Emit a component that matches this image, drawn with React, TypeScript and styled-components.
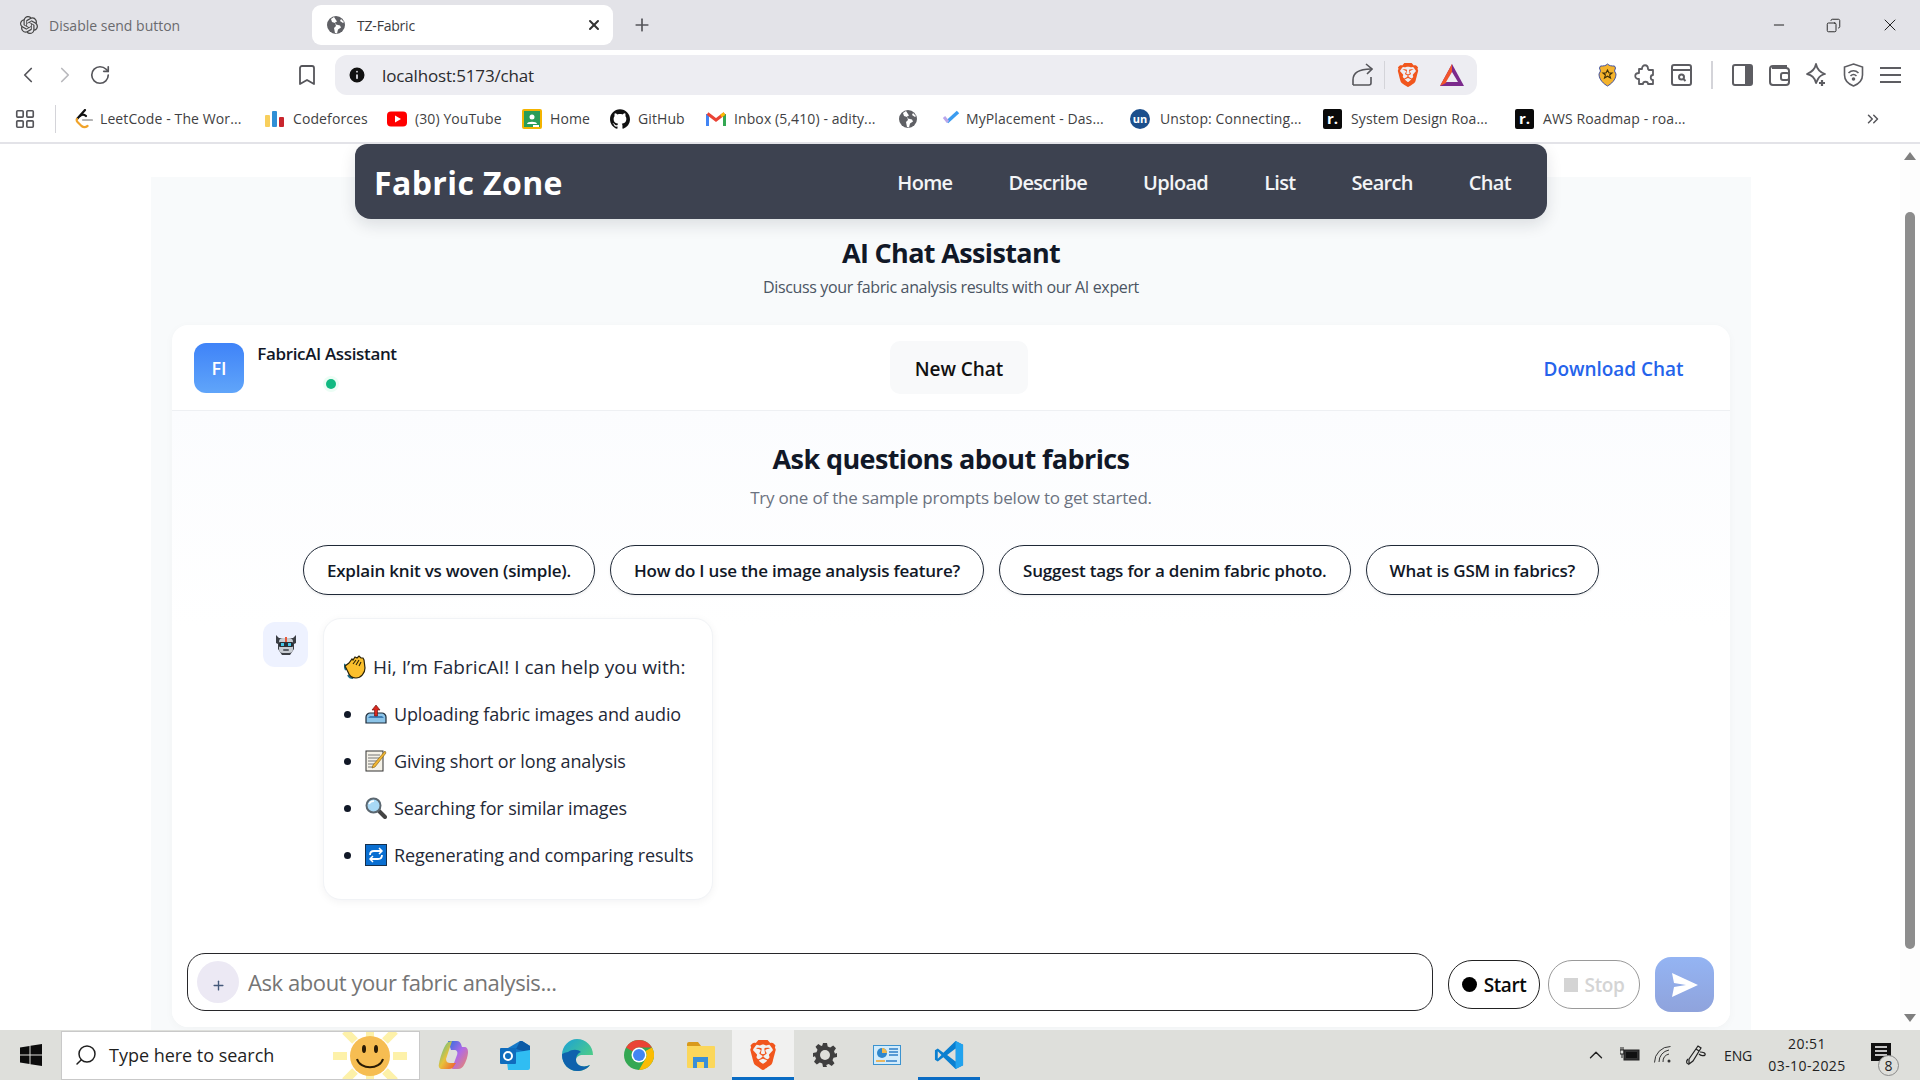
import React from 'react';
import styled, { createGlobalStyle } from 'styled-components';
import { ChevronLeft, ChevronRight, ChevronUp, ChevronsRight, Copy, Info, LayoutGrid, Minus, Plus, RotateCw, Bookmark, Search as SearchIcon, X } from 'lucide-react';
import { SiBrave, SiGithub, SiOpenai } from 'react-icons/si';

const UI_FONT = `"Open Sans", "Noto Sans", sans-serif`;

const GlobalStyle = createGlobalStyle`
    html, body { margin: 0; padding: 0; background: #fff; overflow: hidden; }
    * { box-sizing: border-box; }
    body { font-family: ${UI_FONT}; }
`;

const Screen = styled.div`
    width: 1920px;
    height: 1080px;
    display: flex;
    flex-direction: column;
    overflow: hidden;
`;

/* browser chrome */
const TabStrip = styled.div`
    height: 50px;
    background: #e3e3e8;
    display: flex;
    align-items: flex-end;
    padding: 0 0 5px 20px;
    flex-shrink: 0;
`;
const InactiveTab = styled.div`
    width: 292px;
    height: 40px;
    display: flex;
    align-items: center;
    gap: 11px;
    font-size: 14px;
    color: #6a6a6e;
`;
const ActiveTab = styled.div`
    width: 301px;
    height: 40px;
    background: #fff;
    border-radius: 9px;
    display: flex;
    align-items: center;
    padding: 0 11px 0 15px;
    gap: 12px;
    font-size: 14px;
    letter-spacing: -0.2px;
    color: #3b3b3f;
`;
const TabTitle = styled.span`
    flex: 1;
`;
const NewTab = styled.div`
    margin-left: 19px;
    height: 40px;
    display: flex;
    align-items: center;
    color: #55555a;
`;
const WindowControls = styled.div`
    margin-left: auto;
    height: 40px;
    display: flex;
    align-items: center;
    gap: 39px;
    padding-right: 20px;
    color: #222;
`;
const Toolbar = styled.div`
    height: 50px;
    background: #fff;
    display: flex;
    align-items: center;
    padding-left: 15px;
    flex-shrink: 0;
`;
const NavButtons = styled.div`
    display: flex;
    align-items: center;
    gap: 11px;
    width: 280px;
    color: #55555a;
`;
const AddressBar = styled.div`
    width: 1142px;
    height: 40px;
    margin-left: 16px;
    border-radius: 12px;
    background: #ededf2;
    display: flex;
    align-items: center;
    padding: 0 13px 0 12px;
    font-size: 17px;
    letter-spacing: -0.15px;
    color: #2b2b2e;
`;
const Url = styled.span`
    margin-left: 15px;
    flex: 1;
`;
const Divider = styled.span`
    width: ${p => p.$w ?? 1}px;
    height: 28px;
    background: #d4d4d9;
    margin: 0 ${p => p.$gap ?? 12}px;
    flex-shrink: 0;
`;
const AddressSpacer = styled.span`
    width: 20px;
`;
const ExtensionTray = styled.div`
    display: flex;
    align-items: center;
    margin-left: 120px;
    gap: 16px;
`;
const BookmarksBar = styled.div`
    height: 44px;
    background: #fff;
    border-bottom: 2px solid #e3e3e8;
    display: flex;
    align-items: center;
    padding: 0 0 5px 14px;
    flex-shrink: 0;
    font-size: 14px;
    letter-spacing: 0.1px;
    color: #3f3f43;
`;
const BookmarkItem = styled.div`
    width: ${p => p.$w}px;
    display: flex;
    align-items: center;
    gap: ${p => p.$gap ?? 8}px;
    white-space: nowrap;
    flex-shrink: 0;
`;
const Overflow = styled.div`
    margin-left: auto;
    padding-right: 38px;
    display: flex;
    color: #55555a;
`;
const RoadmapLogo = styled.span`
    width: 19px;
    height: 20px;
    background: #0a0a0a;
    border-radius: 2px;
    color: #fff;
    font-size: 15px;
    font-weight: 700;
    line-height: 19px;
    text-align: center;
    letter-spacing: 0;
`;
const UnstopLogo = styled.span`
    width: 20px;
    height: 20px;
    border-radius: 50%;
    background: #1c4f8c;
    color: #fff;
    font-size: 11px;
    font-weight: 700;
    line-height: 19px;
    text-align: center;
    letter-spacing: 0;
`;

/* page */
const Viewport = styled.div`
    flex: 1;
    min-height: 0;
    display: flex;
`;
const PageArea = styled.div`
    flex: 1;
    min-width: 0;
    padding-left: 2px;
    overflow: hidden;
`;
const Navbar = styled.nav`
    position: relative;
    z-index: 2;
    width: 1192px;
    height: 75px;
    margin: 0 auto;
    padding: 2px 36px 0 19px;
    background: #3d4250;
    border-radius: 12px 12px 16px 16px;
    box-shadow: 0 6px 16px rgba(17, 24, 39, 0.12);
    display: flex;
    align-items: center;
    justify-content: space-between;
`;
const Brand = styled.div`
    font-size: 32px;
    font-weight: 700;
    color: #fff;
    letter-spacing: 0.4px;
`;
const NavLinks = styled.div`
    display: flex;
    gap: 56px;
`;
const NavLink = styled.span`
    font-size: 20px;
    font-weight: 600;
    letter-spacing: -0.68px;
    color: #f3f4f6;
`;
const Container = styled.main`
    width: 1600px;
    height: 853px;
    margin: -42px auto 0;
    padding: 0 21px 3px;
    background: #f8fafb;
    display: flex;
    flex-direction: column;
`;
const PageHeader = styled.header`
    height: 148px;
    padding-top: 57px;
    text-align: center;
`;
const PageTitle = styled.h1`
    margin: 0;
    font-size: 27px;
    line-height: 38px;
    font-weight: 700;
    color: #111827;
    letter-spacing: -0.65px;
`;
const PageSubtitle = styled.p`
    margin: 4px 0 0;
    font-size: 16px;
    line-height: 22px;
    color: #4b5563;
    letter-spacing: -0.36px;
`;
const ChatCard = styled.section`
    flex: 1;
    min-height: 0;
    background: #fff;
    border-radius: 16px;
    box-shadow: 0 2px 10px rgba(17, 24, 39, 0.03);
    display: flex;
    flex-direction: column;
    overflow: hidden;
`;
const ChatHeader = styled.div`
    height: 86px;
    flex-shrink: 0;
    padding: 0 22px;
    border-bottom: 1px solid #eef0f3;
    display: flex;
    align-items: center;
    justify-content: space-between;
`;
const AssistantInfo = styled.div`
    display: flex;
    gap: 13px;
    width: 203px;
`;
const AssistantAvatar = styled.div`
    width: 50px;
    height: 50px;
    border-radius: 12px;
    background: linear-gradient(180deg, #3f83f8 0%, #60a5fa 100%);
    color: #fff;
    font-size: 18px;
    font-weight: 600;
    display: flex;
    align-items: center;
    justify-content: center;
`;
const AssistantMeta = styled.div`
    flex: 1;
    display: flex;
    flex-direction: column;
    align-items: center;
`;
const AssistantName = styled.div`
    font-size: 17px;
    line-height: 22px;
    font-weight: 600;
    letter-spacing: -0.35px;
    color: #111827;
    white-space: nowrap;
`;
const StatusDot = styled.span`
    width: 10px;
    height: 10px;
    margin: 14px 0 0 8px;
    border-radius: 50%;
    background: #10b981;
    box-shadow: 0 0 0 3px #ecfdf5;
`;
const NewChatButton = styled.button`
    width: 138px;
    height: 53px;
    border: 0;
    border-radius: 10px;
    padding: 2px 0 0;
    background: #f8f9fa;
    font: 600 19px ${UI_FONT};
    letter-spacing: -0.05px;
    color: #111;
`;
const DownloadButton = styled.button`
    width: 187px;
    height: 53px;
    border: 0;
    padding: 2px 2px 0 0;
    background: transparent;
    font: 600 19px ${UI_FONT};
    letter-spacing: -0.05px;
    color: #2563eb;
`;
const ChatBody = styled.div`
    flex: 1;
    min-height: 0;
    padding-top: 29px;
    display: flex;
    flex-direction: column;
    background: linear-gradient(180deg, #fbfcfe 0%, #fff 35%);
`;
const IntroTitle = styled.h2`
    margin: 0;
    font-size: 27px;
    line-height: 38px;
    font-weight: 700;
    text-align: center;
    letter-spacing: -0.6px;
    color: #111827;
`;
const IntroText = styled.p`
    margin: 8px 0 0;
    font-size: 17px;
    line-height: 24px;
    text-align: center;
    letter-spacing: -0.2px;
    color: #6b7280;
`;
const Chips = styled.div`
    margin-top: 35px;
    display: flex;
    justify-content: center;
    gap: 15px;
`;
const Chip = styled.button`
    height: 50px;
    padding: 0 23px;
    background: #fff;
    border: 1px solid #1f2937;
    border-radius: 25px;
    font: 600 17px ${UI_FONT};
    letter-spacing: -0.2px;
    color: #111827;
    box-shadow: 0 1px 3px rgba(0, 0, 0, 0.08);
    white-space: nowrap;
`;
const MessageRow = styled.div`
    margin-top: 23px;
    padding-left: 91px;
    display: flex;
    align-items: flex-start;
    gap: 15px;
`;
const BotAvatar = styled.div`
    width: 45px;
    height: 45px;
    margin-top: 4px;
    border-radius: 12px;
    background: #eef2ff;
    display: flex;
    align-items: center;
    justify-content: center;
`;
const Bubble = styled.div`
    width: 390px;
    height: 282px;
    padding: 31px 0 0 20px;
    background: #fff;
    border: 1px solid #f1f3f6;
    border-radius: 18px;
    box-shadow: 0 2px 8px rgba(17, 24, 39, 0.05);
    font-size: 18px;
    letter-spacing: -0.13px;
    color: #1f2937;
`;
const BubbleLine = styled.div`
    height: 34px;
    display: flex;
    align-items: center;
    gap: 6px;
    font-size: 19px;
    letter-spacing: 0.03px;
    white-space: nowrap;
`;
const BubbleList = styled.ul`
    margin: 13px 0 0;
    padding: 0;
    list-style: none;
    display: flex;
    flex-direction: column;
    gap: 13px;
`;
const BubbleItem = styled.li`
    height: 34px;
    display: flex;
    align-items: center;
    gap: 7px;
    white-space: nowrap;

    &::before {
        content: '';
        width: 7px;
        height: 7px;
        border-radius: 50%;
        background: #111827;
        margin-right: 7px;
        flex-shrink: 0;
    }
`;
const Composer = styled.div`
    margin-top: auto;
    padding: 0 16px 11px 15px;
    display: flex;
    align-items: center;
`;
const InputBox = styled.div`
    flex: 1;
    height: 58px;
    margin-bottom: 5px;
    padding-left: 9px;
    border: 1.5px solid #27272a;
    border-radius: 18px;
    display: flex;
    align-items: center;
    gap: 9px;
    font-size: 22px;
    letter-spacing: -0.42px;
    color: #757575;
`;
const AttachButton = styled.span`
    width: 42px;
    height: 42px;
    padding-top: 6px;
    border-radius: 50%;
    background: #ece9f4;
    color: #44597a;
    display: flex;
    align-items: center;
    justify-content: center;
`;
const RecordButton = styled.button`
    width: 92px;
    height: 49px;
    margin-left: ${p => p.$gap}px;
    border: 1px solid ${p => (p.$muted ? '#9a9a9a' : '#222')};
    border-radius: 24px;
    background: #fff;
    display: flex;
    align-items: center;
    justify-content: center;
    gap: 7px;
    font: 600 19px ${UI_FONT};
    letter-spacing: -0.4px;
    color: ${p => (p.$muted ? '#d4d4d4' : '#0a0a0a')};
    padding: 0;
`;
const RecordDot = styled.span`
    width: 15px;
    height: 15px;
    border-radius: 50%;
    background: #000;
`;
const StopSquare = styled.span`
    width: 14px;
    height: 14px;
    background: #d4d4d4;
`;
const SendButton = styled.button`
    width: 59px;
    height: 55px;
    margin-left: 15px;
    border: 0;
    border-radius: 16px;
    background: linear-gradient(180deg, #94b4f3 0%, #8fa3dc 100%);
    display: flex;
    align-items: center;
    justify-content: center;
    padding: 0;
`;
const Scrollbar = styled.div`
    width: 20px;
    background: #fdfdfd;
    display: flex;
    flex-direction: column;
    align-items: center;
    padding: 8px 0;
`;
const ScrollThumb = styled.div`
    width: 10px;
    height: 737px;
    margin-top: 52px;
    border-radius: 5px;
    background: #8c8c8c;
`;
const ScrollArrow = styled.div`
    width: 0;
    height: 0;
    border-left: 6px solid transparent;
    border-right: 6px solid transparent;
    ${p => (p.$down ? 'border-top: 8px solid #7f7f7f; margin-top: auto;' : 'border-bottom: 8px solid #7f7f7f;')}
`;

/* taskbar */
const Taskbar = styled.footer`
    height: 50px;
    flex-shrink: 0;
    background: #dedfdb;
    display: flex;
    align-items: center;
`;
const StartButton = styled.div`
    width: 61px;
    display: flex;
    justify-content: center;
`;
const SearchBox = styled.div`
    width: 359px;
    height: 49px;
    background: #fff;
    border: 1px solid #c9c9c9;
    display: flex;
    align-items: center;
    padding-left: 12px;
    gap: 11px;
    font-size: 18px;
    letter-spacing: -0.02px;
    color: #1f1f1f;
    position: relative;
    overflow: hidden;
`;
const SunBadge = styled.div`
    position: absolute;
    right: 12px;
    top: -5px;
`;
const TaskIcons = styled.div`
    display: flex;
    margin-left: 2px;
`;
const TaskIcon = styled.div`
    width: 62px;
    height: 50px;
    display: flex;
    align-items: center;
    justify-content: center;
    background: ${p => (p.$active ? '#f1f1f0' : 'transparent')};
    border-bottom: 3px solid ${p => (p.$open ? '#0a6cc4' : 'transparent')};
    padding-top: 3px;
`;
const Tray = styled.div`
    margin-left: auto;
    padding-right: 9px;
    display: flex;
    align-items: center;
    color: #222;
`;
const TrayIcon = styled.div`
    width: ${p => p.$w ?? 33}px;
    display: flex;
    justify-content: center;
`;
const TrayLang = styled.div`
    width: 48px;
    margin-left: 2px;
    font-size: 14px;
    letter-spacing: -0.2px;
    text-align: center;
`;
const Clock = styled.div`
    width: 92px;
    margin-left: -1px;
    margin-right: -2px;
    font-size: 14px;
    line-height: 22px;
    letter-spacing: 0.45px;
    text-align: center;
    color: #222;
`;
const Notifications = styled.div`
    width: 60px;
    position: relative;
    display: flex;
    justify-content: center;
    padding-bottom: 6px;
`;
const NotificationCount = styled.span`
    position: absolute;
    left: 27px;
    top: 12px;
    width: 21px;
    height: 21px;
    border-radius: 50%;
    background: #dedfdb;
    border: 1px solid #8a8a8a;
    font-size: 14px;
    line-height: 19px;
    text-align: center;
`;

/* drawn logos */
const GlobeIcon = () => (
    <svg width="18" height="18" viewBox="0 0 18 18"><circle cx="9" cy="9" r="9" fill="#5f6065" /><path d="M7 1 4 3l1 3 3 1 1 3-2 2 1 5 2 .500 1-4 3-2-1-2-4-1-1-2 2-1zM14 3l-1 2 3 2 1-1z" fill="#fff" /></svg>
);
const YouTubeIcon = () => (
    <svg width="20" height="16" viewBox="0 0 20 16"><rect width="20" height="15" y=".5" rx="4" fill="#f00" /><path d="M8 4.500v7l6-3.500z" fill="#fff" /></svg>
);
const CodeforcesIcon = () => (
    <svg width="20" height="16" viewBox="0 0 20 16"><rect x="0" y="4" width="5" height="12" rx="1" fill="#f8cf5c" /><rect x="7" y="0" width="5" height="16" rx="1" fill="#2f8fd6" /><rect x="14" y="6" width="5" height="10" rx="1" fill="#c9252d" /></svg>
);
const LeetCodeIcon = () => (
    <svg width="18" height="20" viewBox="0 0 18 20" fill="none" strokeWidth="2.200" strokeLinecap="round"><path d="M10 1 2 10" stroke="#111" /><path d="M5 7c2-2 4-2 6 0" stroke="#111" /><path d="M2 10c-.5 1-.5 2 .500 3l4 4c2 1.500 4 1.500 6 0" stroke="#f0a32a" /><path d="M8 11h9" stroke="#b3b3b3" /></svg>
);
const ClassroomIcon = () => (
    <svg width="20" height="20" viewBox="0 0 20 20"><rect width="20" height="20" rx="2" fill="#f4b400" /><rect x="2" y="2" width="16" height="16" fill="#2a9d58" /><circle cx="10" cy="8" r="2.500" fill="#fff" /><path d="M5 15c0-3 10-3 10 0z" fill="#fff" /><rect x="11" y="16" width="6" height="2" fill="#fff" /></svg>
);
const GmailIcon = () => (
    <svg width="20" height="16" viewBox="0 0 20 16" fill="none"><path d="M1.500 15V3" stroke="#4285f4" strokeWidth="3" /><path d="M18.500 15V3" stroke="#34a853" strokeWidth="3" /><path d="M1.500 2.500 10 9l8.500-6.500" stroke="#ea4335" strokeWidth="3" /><path d="M18.500 2.500 15 5" stroke="#fbbc04" strokeWidth="3" /></svg>
);
const PlacementIcon = () => (
    <svg width="20" height="20" viewBox="0 0 20 20" fill="none"><path d="M5 13 16 3" stroke="#3b9cf0" strokeWidth="3.500" /><path d="M2 8l4 5" stroke="#b9a6ea" strokeWidth="3" /></svg>
);
const BraveIcon = ({ size = 26 }: { size?: number }) => (
    <SiBrave size={size} color="#f1561d" />
);
const BatTriangle = () => (
    <svg width="24" height="22" viewBox="0 0 24 22"><path d="M12 0 0 22h24z" fill="#7b2a8c" /><path d="M12 0 0 22l6-3 6-11z" fill="#f2552c" /><path d="M12 8 6 18h12z" fill="#ededf2" /></svg>
);
const ShareIcon = () => (
    <svg width="22" height="24" viewBox="0 0 22 24" fill="none" stroke="#55555a" strokeWidth="1.600"><path d="M20 14v6c0 1-.5 2-2 2H2" /><path d="M2 22v-5C2 10 8 6 20 6" /><path d="M15 1l6 5-5 5" /></svg>
);
const PoliceBadge = () => (
    <svg width="21" height="24" viewBox="0 0 21 24"><path d="M10.500 1c2 2 4 2 7 2l1 2-1 3 1.500 3c0 6-5 10-8.500 12C7 21 2 17 2 11l1.500-3-1-3 1-2c3 0 5 0 7-2z" fill="#f4b32c" stroke="#3f51a3" strokeWidth="1" /><path d="m10.500 7 1.500 3h3l-2.400 2 .9 3-3-1.800-3 1.800.9-3L6 10h3z" fill="none" stroke="#3e2f08" strokeWidth="1.100" /></svg>
);
const PuzzleIcon = () => (
    <svg width="21" height="24" viewBox="0 0 21 24" fill="none" stroke="#5d5d62" strokeWidth="1.800" strokeLinejoin="round"><path d="M5 6h3c0-5 6-5 6 0l1 1 4 0v5c-3 0-3 5 0 5v4h-5c0-3-5-3-5 0H5v-5C0 16 0 10 5 10z" /></svg>
);
const ReaderIcon = () => (
    <svg width="21" height="24" viewBox="0 0 21 24" fill="none" stroke="#5d5d62" strokeWidth="2"><rect x="1" y="2" width="19" height="20" rx="2" /><path d="M1 7h19" /><circle cx="10.500" cy="14" r="2.500" /><path d="m12.500 16 2 2" /></svg>
);
const SidePanelIcon = () => (
    <svg width="21" height="22" viewBox="0 0 21 22"><rect x="1" y="1" width="19" height="20" rx="2" fill="#fff" stroke="#5d5d62" strokeWidth="2" /><rect x="13" y="1" width="7" height="20" fill="#5d5d62" /></svg>
);
const WalletIcon = () => (
    <svg width="21" height="22" viewBox="0 0 21 22" fill="none" stroke="#5d5d62" strokeWidth="2"><path d="M17 4V2H4C2 2 1 3 1 5v13c0 2 1 3 3 3h13c2 0 3-1 3-3V7c0-2-1-3-3-3H3" /><rect x="12" y="9" width="8" height="7" rx="2" /></svg>
);
const SparkIcon = () => (
    <svg width="21" height="24" viewBox="0 0 21 24" fill="none" stroke="#5d5d62" strokeWidth="1.800" strokeLinejoin="round"><path d="M10 1c1 5 3 8 9 10-4 1-6 3-7 5l-2 4c-1-5-4-8-9-9 5-2 8-5 9-10z" /><path d="M16 17v6M13 20h6" strokeWidth="2.200" /></svg>
);
const ShieldIcon = () => (
    <svg width="21" height="24" viewBox="0 0 21 24" fill="none" stroke="#5d5d62" strokeWidth="1.600"><path d="M10.500 1l9 3v8c0 5-4 9-9 11-5-2-9-6-9-11V4z" /><path d="M5.500 10c3-3 7-3 10 0M7.500 13c2-2 4-2 6 0" /><circle cx="10.500" cy="16" r="1" fill="#5d5d62" /></svg>
);
const MenuIcon = () => (
    <svg width="21" height="18" viewBox="0 0 21 18"><path d="M0 2h21M0 9h21M0 16h21" stroke="#5d5d62" strokeWidth="2" /></svg>
);
const WindowsLogo = () => (
    <svg width="22" height="22" viewBox="0 0 22 22"><path d="M0 3.500 9.500 2v8.500H0zM10.500 1.800 22 0v10.500H10.500zM0 11.500h9.500V20L0 18.500zM10.500 11.500H22V22l-11.500-1.800z" fill="#0c0c0c" /></svg>
);
const SunFace = () => (
    <svg width="74" height="58" viewBox="0 0 74 58">
        <g stroke="#fdf0a0" strokeWidth="8" opacity=".9">
            <path d="M37 0v12M37 46v12M0 29h14M60 29h14M12 4l10 10M52 44l10 10M62 4l-10 10M22 44l-10 10" />
        </g>
        <ellipse cx="37" cy="29" rx="20" ry="20" fill="#f6bd52" />
        <ellipse cx="31" cy="22" rx="2" ry="4" fill="#2a1c05" />
        <ellipse cx="43" cy="22" rx="2" ry="4" fill="#2a1c05" />
        <path d="M24 32c3 11 23 11 26 0" fill="none" stroke="#2a1c05" strokeWidth="2" />
    </svg>
);
const CopilotIcon = () => (
    <svg width="30" height="28" viewBox="0 0 30 28">
        <defs>
            <linearGradient id="copilotLeft" x1="0" y1="0" x2="1" y2="1"><stop offset="0" stopColor="#2fc4a8" /><stop offset=".5" stopColor="#e8c13a" /><stop offset="1" stopColor="#f0562f" /></linearGradient>
            <linearGradient id="copilotRight" x1="0" y1="0" x2="1" y2="1"><stop offset="0" stopColor="#2b6fe0" /><stop offset=".5" stopColor="#b06ae6" /><stop offset="1" stopColor="#f08a5c" /></linearGradient>
        </defs>
        <path d="M10 0h9c2 0 3 1 4 3l1 3h2c3 0 4 2 4 5 0 4-2 10-4 13-1 2-3 4-6 4h-6l2-6 3-8c1-3 0-5-3-5h-3z" fill="url(#copilotRight)" />
        <path d="M9 2c1-1 3-2 5-2l-2 6-4 12c0 3 2 4 4 4h6l-2 3c-1 2-2 3-5 3H4C2 28 0 26 1 23 2 17 5 7 9 2z" fill="url(#copilotLeft)" />
    </svg>
);
const OutlookIcon = () => (
    <svg width="30" height="30" viewBox="0 0 30 30"><path d="M8 8 20 1h2l8 5v9H8z" fill="#1478c8" /><path d="M20 1h2l8 5v7L16 9z" fill="#0c5aa6" /><path d="M6 14l24-4v18a2 2 0 0 1-2 2H8z" fill="#30bdf2" /><rect x="0" y="8" width="16" height="16" rx="1" fill="#0f6cbd" /><circle cx="8" cy="16" r="4" fill="none" stroke="#fff" strokeWidth="2" /></svg>
);
const EdgeIcon = () => (
    <svg width="31" height="32" viewBox="0 0 31 32">
        <defs><linearGradient id="edgeTop" x1="0" y1="0" x2="1" y2="1"><stop offset="0" stopColor="#1aa0d8" /><stop offset="1" stopColor="#5fdc6c" /></linearGradient></defs>
        <path d="M15 0C7 0 0 7 0 16c0 9 7 16 15 16 5 0 10-2 13-6-6 3-14 1-14-5 0-3 3-5 7-5h10C31 7 24 0 15 0z" fill="url(#edgeTop)" />
        <path d="M0 16c0 9 7 16 15 16 5 0 10-2 13-6-6 3-14 1-14-5 0-4 2-7 5-8-3-3-9-3-13 0-3 1-6 1-6 3z" fill="#0f62ad" />
    </svg>
);
const ChromeIcon = () => (
    <svg width="30" height="30" viewBox="0 0 30 30"><circle cx="15" cy="15" r="15" fill="#34a853" /><path d="M15 0a15 15 0 0 1 13 7.500H15a7.500 7.500 0 0 0-6.500 3.750L2 7.500A15 15 0 0 1 15 0z" fill="#ea4335" /><path d="M28 7.500A15 15 0 0 1 15 30l6.500-11.250A7.500 7.500 0 0 0 21.500 11z" fill="#fbbc04" /><circle cx="15" cy="15" r="7.500" fill="#fff" /><circle cx="15" cy="15" r="6" fill="#4285f4" /></svg>
);
const FilesIcon = () => (
    <svg width="28" height="26" viewBox="0 0 28 26"><path d="M0 2a2 2 0 0 1 2-2h9l3 4H0z" fill="#d99a1c" /><rect x="0" y="4" width="28" height="22" rx="1" fill="#fbd75b" /><path d="M6 26V15h15v11h-4v-6h-7v6z" fill="#3a8fd8" /></svg>
);
const GearIcon = () => (
    <svg width="24" height="24" viewBox="0 0 24 24"><path d="M10 0h4l.7 3.500 2.500 1 3-2 2.800 2.800-2 3 1 2.500L24 10v4l-3.500.7-1 2.500 2 3-2.800 2.800-3-2-2.500 1L14 24h-4l-.7-3.500-2.500-1-3 2L1 18.700l2-3-1-2.500L0 14v-4l3.500-.7 1-2.500-2-3L5.300 1l3 2 1-.4z" fill="#3f3f3f" /><circle cx="12" cy="12" r="5" fill="#dedfdb" /></svg>
);
const ControlPanelIcon = () => (
    <svg width="28" height="20" viewBox="0 0 28 20"><rect x=".5" y=".5" width="27" height="19" fill="#d3ecfb" stroke="#3b93d0" /><circle cx="9" cy="8" r="5" fill="#2f87cc" /><path d="M9 3v5h5a5 5 0 0 0-5-5z" fill="#f2b84b" /><path d="M16 4h9M16 7h9M16 10h9" stroke="#2f7fc8" strokeWidth="1.500" /><path d="M3 16h9" stroke="#f0a32a" strokeWidth="1.500" /><path d="M13 16h11" stroke="#2f7fc8" strokeWidth="1.500" /></svg>
);
const VsCodeIcon = () => (
    <svg width="30" height="30" viewBox="0 0 32 32"><path d="M23 1l8 4v22l-8 4-13-12.500L4 23l-3-2v-10l3-2 6 4.500z" fill="#0a7fd0" /><path d="M23 1l8 4v22l-8 4z" fill="#22a3ee" /><path d="M23 9v14l-9-7z" fill="#dedfdb" /><path d="M4 12v8l4-4z" fill="#dedfdb" /></svg>
);
const BatteryIcon = () => (
    <svg width="20" height="16" viewBox="0 0 20 16"><rect x="4" y="3" width="15" height="10" fill="#333" stroke="#222" /><rect x="6" y="5" width="11" height="6" fill="#111" /><path d="M1 0v3M3 0v3M0 3h4v4H0zM2 7v4" stroke="#222" fill="none" /></svg>
);
const NetworkIcon = () => (
    <svg width="18" height="18" viewBox="0 0 18 18" fill="none" stroke="#333" strokeWidth="1"><path d="M1 17A16 16 0 0 1 17 1" transform="translate(-.5 -.5)" /><path d="M5 16A12 12 0 0 1 15 4" /><path d="M9 16A8 8 0 0 1 15 8" /><circle cx="15" cy="15" r="1.500" fill="#333" stroke="none" /></svg>
);
const InkIcon = () => (
    <svg width="22" height="22" viewBox="0 0 22 22" fill="none" stroke="#222" strokeWidth="1.200"><path d="M4 15 13 2l3 2-8 13-4 3z" /><path d="M11 5l3 2" /><path d="M15 8c3 0 6 1 5 3-1 1-4 1-6-1" /><path d="M3 15c-2 2-2 5 1 5" /></svg>
);
const RobotEmoji = () => (
    <svg width="24" height="24" viewBox="0 0 24 24"><path d="M2 2l3 3h14l3-3v8l-2 1v5l-4 6H8l-4-6v-5l-2-1z" fill="#3c3f45" /><rect x="5" y="5" width="14" height="15" rx="4" fill="#c8ccd2" /><rect x="11" y="4" width="2" height="5" fill="#e85a3a" /><rect x="5" y="9" width="14" height="5" rx="1" fill="#2b2f36" /><rect x="7" y="10" width="3" height="3" fill="#43c6e8" /><rect x="14" y="10" width="3" height="3" fill="#43c6e8" /><rect x="9" y="16" width="6" height="2" rx="1" fill="#5a5e66" /></svg>
);
const WaveEmoji = () => (
    <svg width="23" height="24" viewBox="0 0 23 24"><path d="M1 9c-1 2 0 4 1 6M4 20c1 2 3 3 5 3" fill="none" stroke="#1f6f8b" strokeWidth="2" /><path d="M5 8l3-4 1 1 2-3 2 1 2-2 2 2 2 0 1 2 1 8c0 5-4 10-9 10-4 0-7-3-8-6l-3-6z" fill="#fbc02d" stroke="#2b2208" strokeWidth="1.200" /><path d="M9 9l3-4M12 10l3-5M15 11l2-4" stroke="#2b2208" strokeWidth="1.100" /></svg>
);
const TrayEmoji = () => (
    <svg width="22" height="22" viewBox="0 0 22 22"><path d="M1 14c0-2 2-4 4-4h12c2 0 4 2 4 4v6H1z" fill="#8cc4e8" stroke="#1d2a38" strokeWidth="1.200" /><path d="M5 13h12l2 2H3z" fill="#3d7fb8" /><path d="M11 2l4 5h-2.500v6h-3V7H7z" fill="#d9281e" stroke="#5c0c08" strokeWidth=".6" /></svg>
);
const MemoEmoji = () => (
    <svg width="22" height="22" viewBox="0 0 22 22"><rect x="1" y="1" width="17" height="20" fill="#f5f2e8" stroke="#333" /><path d="M3 5h12M3 8h12M3 11h10M3 14h7M3 17h5" stroke="#777" strokeWidth="1" /><path d="M20 1 8 15l-1 3 3-1L21 3z" fill="#f2b632" stroke="#7a5b12" strokeWidth=".6" /></svg>
);
const LensEmoji = () => (
    <svg width="22" height="22" viewBox="0 0 22 22"><path d="M13 13l7 7" stroke="#444" strokeWidth="4" strokeLinecap="round" /><circle cx="8.500" cy="8.500" r="7" fill="#a8d8f5" stroke="#5b6770" strokeWidth="2" /><path d="M4 7c1-2 3-3 5-3" stroke="#fff" strokeWidth="1.500" fill="none" /></svg>
);
const RepeatEmoji = () => (
    <svg width="22" height="22" viewBox="0 0 22 22"><rect x=".5" y=".5" width="21" height="21" fill="#0a6fd1" stroke="#14304f" /><path d="M5 11c0-3 2-4 4-4h7M17 11c0 3-2 4-4 4H6" fill="none" stroke="#fff" strokeWidth="1.800" /><path d="M14 4l3 3-3 3M8 12l-3 3 3 3" fill="none" stroke="#fff" strokeWidth="1.500" /></svg>
);

const BOOKMARKS = [
    { w: 190, icon: <LeetCodeIcon />, label: 'LeetCode - The Wor...', gap: 7 },
    { w: 122, icon: <CodeforcesIcon />, label: 'Codeforces' },
    { w: 135, icon: <YouTubeIcon />, label: '(30) YouTube' },
    { w: 88, icon: <ClassroomIcon />, label: 'Home' },
    { w: 96, icon: <SiGithub size={20} color="#111" />, label: 'GitHub' },
    { w: 193, icon: <GmailIcon />, label: 'Inbox (5,410) - adity...' },
    { w: 43, icon: <GlobeIcon />, label: '' },
    { w: 188, icon: <PlacementIcon />, label: 'MyPlacement - Das...', gap: 4 },
    { w: 193, icon: <UnstopLogo>un</UnstopLogo>, label: 'Unstop: Connecting...', gap: 10 },
    { w: 192, icon: <RoadmapLogo>r.</RoadmapLogo>, label: 'System Design Roa...', gap: 9 },
    { w: 192, icon: <RoadmapLogo>r.</RoadmapLogo>, label: 'AWS Roadmap - roa...', gap: 9 }
];

const NAV_LINKS = ['Home', 'Describe', 'Upload', 'List', 'Search', 'Chat'];

const PROMPTS = [
    'Explain knit vs woven (simple).',
    'How do I use the image analysis feature?',
    'Suggest tags for a denim fabric photo.',
    'What is GSM in fabrics?'
];

const CAPABILITIES = [
    { icon: <TrayEmoji />, label: 'Uploading fabric images and audio' },
    { icon: <MemoEmoji />, label: 'Giving short or long analysis' },
    { icon: <LensEmoji />, label: 'Searching for similar images' },
    { icon: <RepeatEmoji />, label: 'Regenerating and comparing results' }
];

const App = () => (
    <Screen>
        <GlobalStyle />
        <TabStrip>
            <InactiveTab>
                <SiOpenai size={18} color="#444" />
                Disable send button
            </InactiveTab>
            <ActiveTab>
                <GlobeIcon />
                <TabTitle>TZ-Fabric</TabTitle>
                <X size={16} strokeWidth={3} color="#333" />
            </ActiveTab>
            <NewTab><Plus size={20} /></NewTab>
            <WindowControls>
                <Minus size={16} strokeWidth={1.5} />
                <Copy size={15} strokeWidth={1.5} style={{ transform: 'scaleX(-1)' }} />
                <X size={20} strokeWidth={1.2} />
            </WindowControls>
        </TabStrip>
        <Toolbar>
            <NavButtons>
                <ChevronLeft size={26} strokeWidth={1.6} />
                <ChevronRight size={26} strokeWidth={1.6} color="#b9b9bd" />
                <RotateCw size={22} strokeWidth={1.8} />
            </NavButtons>
            <Bookmark size={24} strokeWidth={1.8} color="#55555a" />
            <AddressBar>
                <Info size={20} fill="#111" color="#ededf2" />
                <Url>localhost:5173/chat</Url>
                <ShareIcon />
                <Divider $gap={11} />
                <BraveIcon size={24} />
                <AddressSpacer />
                <BatTriangle />
            </AddressBar>
            <ExtensionTray>
                <PoliceBadge />
                <PuzzleIcon />
                <ReaderIcon />
                <Divider $w={2} $gap={3} />
                <SidePanelIcon />
                <WalletIcon />
                <SparkIcon />
                <ShieldIcon />
                <MenuIcon />
            </ExtensionTray>
        </Toolbar>
        <BookmarksBar>
            <LayoutGrid size={22} strokeWidth={1.8} color="#55555a" />
            <Divider $gap={19} />
            {BOOKMARKS.map((item, index) => (
                <BookmarkItem key={index} $w={item.w} $gap={item.gap}>
                    {item.icon}
                    {item.label}
                </BookmarkItem>
            ))}
            <Overflow><ChevronsRight size={18} /></Overflow>
        </BookmarksBar>
        <Viewport>
            <PageArea>
                <Navbar>
                    <Brand>Fabric Zone</Brand>
                    <NavLinks>
                        {NAV_LINKS.map(link => <NavLink key={link}>{link}</NavLink>)}
                    </NavLinks>
                </Navbar>
                <Container>
                    <PageHeader>
                        <PageTitle>AI Chat Assistant</PageTitle>
                        <PageSubtitle>Discuss your fabric analysis results with our AI expert</PageSubtitle>
                    </PageHeader>
                    <ChatCard>
                        <ChatHeader>
                            <AssistantInfo>
                                <AssistantAvatar>FI</AssistantAvatar>
                                <AssistantMeta>
                                    <AssistantName>FabricAI Assistant</AssistantName>
                                    <StatusDot />
                                </AssistantMeta>
                            </AssistantInfo>
                            <NewChatButton>New Chat</NewChatButton>
                            <DownloadButton>Download Chat</DownloadButton>
                        </ChatHeader>
                        <ChatBody>
                            <IntroTitle>Ask questions about fabrics</IntroTitle>
                            <IntroText>Try one of the sample prompts below to get started.</IntroText>
                            <Chips>
                                {PROMPTS.map(prompt => <Chip key={prompt}>{prompt}</Chip>)}
                            </Chips>
                            <MessageRow>
                                <BotAvatar><RobotEmoji /></BotAvatar>
                                <Bubble>
                                    <BubbleLine><WaveEmoji />Hi, I’m FabricAI! I can help you with:</BubbleLine>
                                    <BubbleList>
                                        {CAPABILITIES.map(item => (
                                            <BubbleItem key={item.label}>{item.icon}{item.label}</BubbleItem>
                                        ))}
                                    </BubbleList>
                                </Bubble>
                            </MessageRow>
                            <Composer>
                                <InputBox>
                                    <AttachButton><Plus size={15} strokeWidth={2.2} /></AttachButton>
                                    Ask about your fabric analysis...
                                </InputBox>
                                <RecordButton $gap={15}><RecordDot />Start</RecordButton>
                                <RecordButton $gap={8} $muted><StopSquare />Stop</RecordButton>
                                <SendButton>
                                    <svg width="26" height="24" viewBox="0 0 26 24"><path d="M0 0l26 12L0 24l2-10 12-2-12-2z" fill="#fff" /></svg>
                                </SendButton>
                            </Composer>
                        </ChatBody>
                    </ChatCard>
                </Container>
            </PageArea>
            <Scrollbar>
                <ScrollArrow />
                <ScrollThumb />
                <ScrollArrow $down />
            </Scrollbar>
        </Viewport>
        <Taskbar>
            <StartButton><WindowsLogo /></StartButton>
            <SearchBox>
                <SearchIcon size={24} strokeWidth={1.5} style={{ transform: 'scaleX(-1)' }} />
                Type here to search
                <SunBadge><SunFace /></SunBadge>
            </SearchBox>
            <TaskIcons>
                <TaskIcon><CopilotIcon /></TaskIcon>
                <TaskIcon><OutlookIcon /></TaskIcon>
                <TaskIcon><EdgeIcon /></TaskIcon>
                <TaskIcon><ChromeIcon /></TaskIcon>
                <TaskIcon><FilesIcon /></TaskIcon>
                <TaskIcon $active $open><BraveIcon size={30} /></TaskIcon>
                <TaskIcon><GearIcon /></TaskIcon>
                <TaskIcon><ControlPanelIcon /></TaskIcon>
                <TaskIcon $open><VsCodeIcon /></TaskIcon>
            </TaskIcons>
            <Tray>
                <TrayIcon $w={35}><ChevronUp size={22} strokeWidth={1.5} /></TrayIcon>
                <TrayIcon><BatteryIcon /></TrayIcon>
                <TrayIcon><NetworkIcon /></TrayIcon>
                <TrayIcon><InkIcon /></TrayIcon>
                <TrayLang>ENG</TrayLang>
                <Clock>20:51<br />03-10-2025</Clock>
                <Notifications>
                    <svg width="20" height="18" viewBox="0 0 20 18"><path d="M0 0h20v18H0z" fill="#111" /><path d="M4 4h12M4 8h12M4 12h12" stroke="#fff" strokeWidth="1.500" /></svg>
                    <NotificationCount>8</NotificationCount>
                </Notifications>
            </Tray>
        </Taskbar>
    </Screen>
);

export default App;
